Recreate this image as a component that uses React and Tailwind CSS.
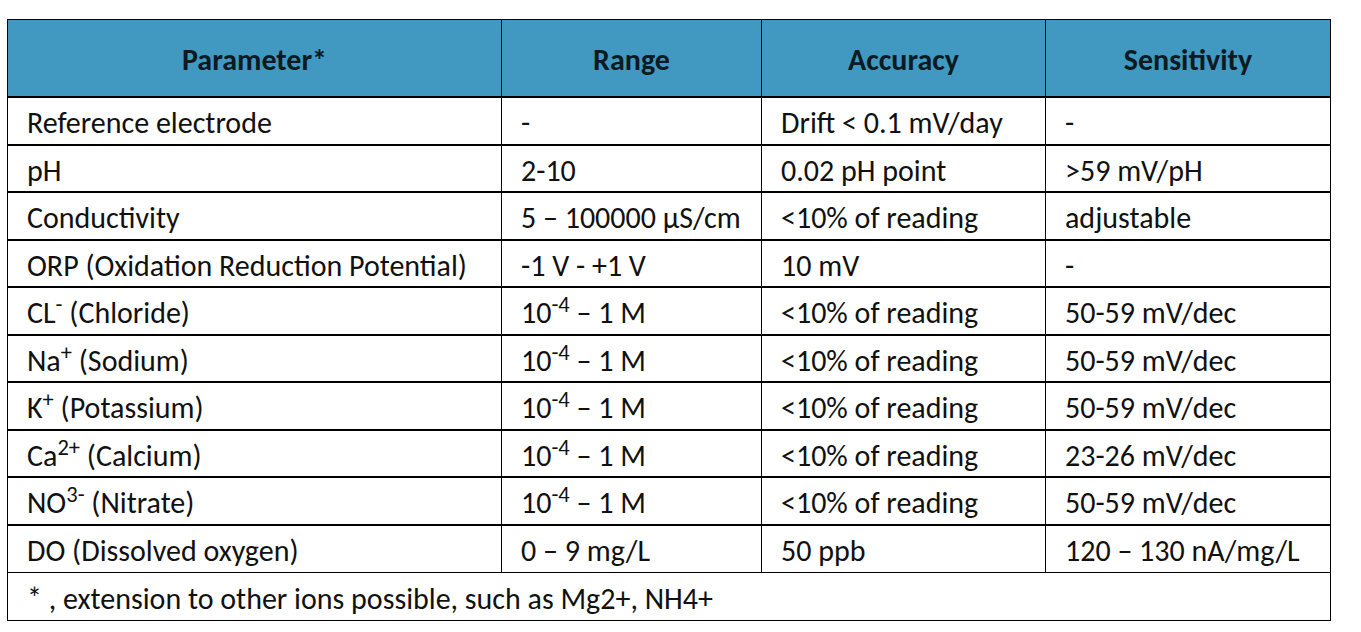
const cols = 'grid grid-cols-[494px_260px_284px_284px]';

const rows = [
  { p: 'Reference electrode', r: '-', a: 'Drift < 0.1 mV/day', s: '-' },
  { p: 'pH', r: '2-10', a: '0.02 pH point', s: '>59 mV/pH' },
  { p: 'Conductivity', r: '5 – 100000 µS/cm', a: '<10% of reading', s: 'adjustable' },
  { p: 'ORP (Oxidation Reduction Potential)', r: '-1 V - +1 V', a: '10 mV', s: '-' },
  { p: <>CL<sup>-</sup> (Chloride)</>, r: 'molar', a: '<10% of reading', s: '50-59 mV/dec' },
  { p: <>Na<sup>+</sup> (Sodium)</>, r: 'molar', a: '<10% of reading', s: '50-59 mV/dec' },
  { p: <>K<sup>+</sup> (Potassium)</>, r: 'molar', a: '<10% of reading', s: '50-59 mV/dec' },
  { p: <>Ca<sup>2+</sup> (Calcium)</>, r: 'molar', a: '<10% of reading', s: '23-26 mV/dec' },
  { p: <>NO<sup>3-</sup> (Nitrate)</>, r: 'molar', a: '<10% of reading', s: '50-59 mV/dec' },
  { p: 'DO (Dissolved oxygen)', r: '0 – 9 mg/L', a: '50 ppb', s: '120 – 130 nA/mg/L', last: true },
];

const Molar = () => (
  <>
    10<sup>-4</sup> – 1 M
  </>
);

const Cell = ({ children, end }) => (
  <div className={`flex items-center pl-[19px] pt-[5px] whitespace-nowrap ${end ? '' : 'border-r border-black'}`}>
    <span>{children}</span>
  </div>
);

const HeadCell = ({ children, end }) => (
  <div className={`flex items-center justify-center font-bold pt-[4px] ${end ? '' : 'border-r border-black'}`}>
    <span>{children}</span>
  </div>
);

export default function App() {
  return (
    <div className="min-h-screen bg-white pt-[19px] pl-[7px]">
      <div
        className="w-[1324px] border-l border-r border-t border-black text-[#111] text-[30px] leading-none"
        style={{ fontFamily: 'Carlito, Calibri, Lato, sans-serif' }}
      >
        {/* header */}
        <div className={`${cols} h-[78px] bg-[#4199c1] border-b-2 border-black text-[#0d1a22]`}>
          <HeadCell>Parameter*</HeadCell>
          <HeadCell>Range</HeadCell>
          <HeadCell>Accuracy</HeadCell>
          <HeadCell end>Sensitivity</HeadCell>
        </div>

        {rows.map((row, i) => (
          <div
            key={i}
            className={`${cols} h-[47.5px] border-black ${row.last ? 'border-b' : 'border-b-2'}`}
          >
            <Cell>{row.p}</Cell>
            <Cell>{row.r === 'molar' ? <Molar /> : row.r}</Cell>
            <Cell>{row.a}</Cell>
            <Cell end>{row.s}</Cell>
          </div>
        ))}

        {/* footnote */}
        <div className="flex items-center h-[47.5px] border-b border-black pl-[19px] pt-[5px] whitespace-nowrap">
          <span>* , extension to other ions possible, such as Mg2+, NH4+</span>
        </div>
      </div>
    </div>
  );
}
